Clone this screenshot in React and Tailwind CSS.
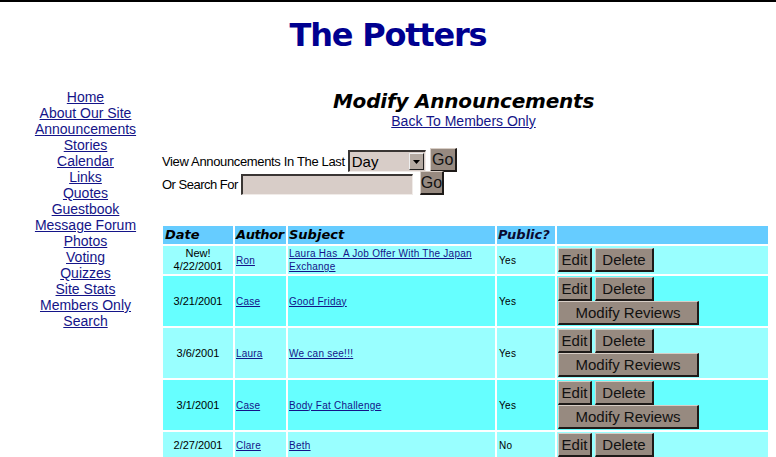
import React from 'react';

const navLinks = [
  'Home',
  'About Our Site',
  'Announcements',
  'Stories',
  'Calendar',
  'Links',
  'Quotes',
  'Guestbook',
  'Message Forum',
  'Photos',
  'Voting',
  'Quizzes',
  'Site Stats',
  'Members Only',
  'Search',
];

const rows = [
  { date: '4/22/2001', isNew: true, author: 'Ron', subject: 'Laura Has\u00a0 A Job Offer With The Japan Exchange', pub: 'Yes', reviews: false, bright: false },
  { date: '3/21/2001', author: 'Case', subject: 'Good Friday', pub: 'Yes', reviews: true, bright: true },
  { date: '3/6/2001', author: 'Laura', subject: 'We can see!!!', pub: 'Yes', reviews: true, bright: false },
  { date: '3/1/2001', author: 'Case', subject: 'Body Fat Challenge', pub: 'Yes', reviews: true, bright: true },
  { date: '2/27/2001', author: 'Clare', subject: 'Beth', pub: 'No', reviews: false, bright: false },
];

const btn =
  'h-[24px] bg-[#978a80] text-[15px] text-[#111] leading-none flex items-center justify-center border-t border-l border-t-[#d8cec6] border-l-[#d8cec6] border-b-2 border-r-2 border-b-[#1e1a18] border-r-[#1e1a18]';

const heading = "font-['DejaVu_Sans',sans-serif] font-bold italic";

const App = () => {
  return (
    <div className="min-h-screen bg-white border-t-2 border-black font-['Liberation_Sans',Arial,sans-serif] text-black">
      {/* SITE TITLE */}
      <h1 className="pt-[17px] text-center text-[32px] leading-[32px] tracking-[-1.2px] text-[#000090] font-['DejaVu_Sans',sans-serif] font-bold">
        The Potters
      </h1>

      <div className="flex mt-[38px]">
        {/* LEFT NAV */}
        <nav className="w-[161px] pl-[10px] flex flex-col items-center text-[14px] leading-[16px]">
          {navLinks.map((link) => (
            <a key={link} href="#" className="text-[#141488] underline whitespace-nowrap">
              {link}
            </a>
          ))}
        </nav>

        {/* MAIN */}
        <main className="w-[609px] pt-[1px]">
          <div className="text-center pr-[4px] text-[14px] leading-[16px]">
            <h2 className={`${heading} text-[20px] leading-[23px] tracking-[-0.2px]`}>Modify Announcements</h2>
            <a href="#" className="text-[#141488] underline">
              Back To Members Only
            </a>
          </div>

          {/* FILTER FORM */}
          <div className="mt-[19px] pl-[1px] text-[13px]">
            <div className="flex items-end h-[24px]">
              <span className="leading-[16px] mb-[2px] tracking-[-0.35px]">View Announcements In The Last</span>
              <div className="ml-[3px] w-[78px] h-[22px] bg-[#d8cdc8] border-t-2 border-l-2 border-t-[#3a3634] border-l-[#3a3634] border-b border-r border-b-[#f0ebe8] border-r-[#f0ebe8] flex items-center justify-between pl-[2px] pr-[1px]">
                <span className="text-[15px] leading-none">Day</span>
                <span className="w-[15px] h-[17px] bg-[#b4aaa2] border-b border-r border-b-[#222] border-r-[#222] border-t border-l border-t-[#eee] border-l-[#eee] flex items-center justify-center">
                  <svg width="7" height="4" viewBox="0 0 7 4">
                    <path d="M0 0h7L3.5 4z" fill="#000" />
                  </svg>
                </span>
              </div>
              <button className={`${btn} ml-[4px] w-[27px] text-[16px]`}>Go</button>
            </div>
            <div className="flex items-end h-[23px]">
              <span className="leading-[16px] mb-[2px] tracking-[-0.5px]">Or Search For</span>
              <div className="ml-[3px] w-[172px] h-[21px] bg-[#d8cdc8] border-t-2 border-l-2 border-t-[#3a3634] border-l-[#3a3634] border-b border-r border-b-[#f0ebe8] border-r-[#f0ebe8]" />
              <button className={`${btn} ml-[7px] w-[24px] h-[23px] text-[16px]`}>Go</button>
            </div>
          </div>

          {/* ANNOUNCEMENTS TABLE */}
          <table className="mt-[29px] w-[609px] table-fixed border-separate border-spacing-[2px]">
            <thead>
              <tr className="bg-[#66ccff]">
                <th className={`${heading} w-[70px] text-left text-[13px] leading-[16px] px-[2px] py-[1px]`}>Date</th>
                <th className={`${heading} w-[51px] text-left text-[13px] leading-[16px] px-[1px] py-[1px] tracking-[-0.4px]`}>Author</th>
                <th className={`${heading} w-[207px] text-left text-[13px] leading-[16px] px-[1px] py-[1px]`}>Subject</th>
                <th className={`${heading} w-[58px] text-left text-[13px] leading-[16px] px-[1px] py-[1px] text-[#0a0a30]`}>Public?</th>
                <th className="w-[211px]"></th>
              </tr>
            </thead>
            <tbody>
              {rows.map((row, i) => (
                <tr key={i} className={row.bright ? 'bg-[#66ffff]' : 'bg-[#99ffff]'}>
                  <td className="text-center text-[11px] leading-[13px] py-[1px]">
                    {row.isNew && <div>New!</div>}
                    <div>{row.date}</div>
                  </td>
                  <td className="px-[1px] text-[10px] leading-[13px]">
                    <a href="#" className="text-[#141488] underline tracking-[0.2px]">{row.author}</a>
                  </td>
                  <td className="px-[1px] text-[10px] leading-[13px]">
                    <a href="#" className="text-[#141488] underline tracking-[0.25px]">{row.subject}</a>
                  </td>
                  <td className="pl-[2px] text-[10px] leading-[13px] tracking-[0.3px]">{row.pub}</td>
                  <td className="p-[1px]">
                    <div className="flex gap-[3px]">
                      <button className={`${btn} w-[34px]`}>Edit</button>
                      <button className={`${btn} w-[59px]`}>Delete</button>
                    </div>
                    {row.reviews && (
                      <button className={`${btn} w-[141px]`}>Modify Reviews</button>
                    )}
                  </td>
                </tr>
              ))}
            </tbody>
          </table>
        </main>
      </div>
    </div>
  );
};

export default App;
